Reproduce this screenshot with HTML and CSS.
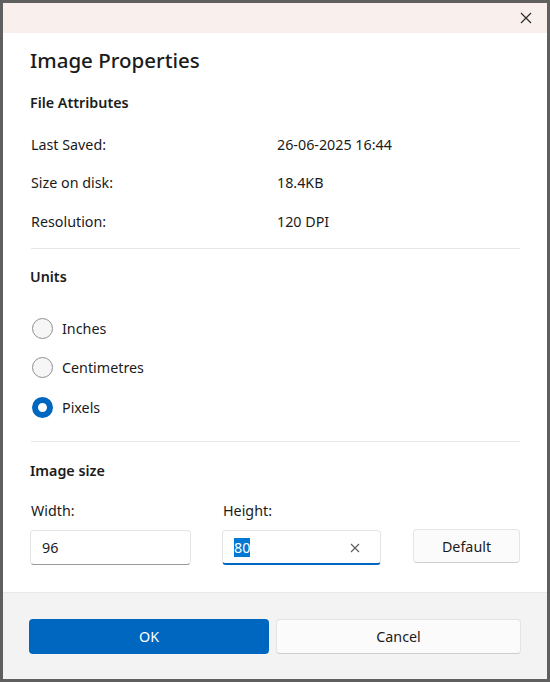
FILE: index.html
```html
<!DOCTYPE html>
<html>
<head>
<meta charset="utf-8">
<link rel="stylesheet" href="styles.css">
</head>
<body>
<div class="window">
  <div class="titlebar">
    <div class="close">
      <svg width="12" height="12" viewBox="0 0 12 12"><path d="M1 1 L11 11 M11 1 L1 11" stroke="#2b2b2b" stroke-width="1.2" fill="none"/></svg>
    </div>
  </div>
  <div class="content">
    <h1 class="title">Image Properties</h1>
    <h2 class="section first">File Attributes</h2>
    <div class="attrs">
      <div class="label">Last Saved:</div><div class="value">26-06-2025 16:44</div>
      <div class="label">Size on disk:</div><div class="value">18.4KB</div>
      <div class="label">Resolution:</div><div class="value">120 DPI</div>
    </div>
    <div class="sep sep1"></div>
    <h2 class="section units">Units</h2>
    <div class="radios">
      <div class="radio"><span class="dot"></span><span>Inches</span></div>
      <div class="radio"><span class="dot"></span><span>Centimetres</span></div>
      <div class="radio"><span class="dot checked"></span><span>Pixels</span></div>
    </div>
    <div class="sep sep2"></div>
    <h2 class="section size">Image size</h2>
    <div class="sizes">
      <div class="field f-width">
        <div class="flabel">Width:</div>
        <div class="input"><span class="txt">96</span></div>
      </div>
      <div class="field f-height">
        <div class="flabel">Height:</div>
        <div class="input focused"><span class="txt"><span class="sel">80</span></span>
          <svg class="clear" width="10" height="10" viewBox="0 0 10 10"><path d="M1 1 L9 9 M9 1 L1 9" stroke="#5c5c5c" stroke-width="1.1" fill="none"/></svg>
        </div>
      </div>
      <div class="field f-default">
        <div class="btn default">Default</div>
      </div>
    </div>
  </div>
  <div class="footer">
    <div class="btn ok">OK</div>
    <div class="btn cancel">Cancel</div>
  </div>
</div>
</body>
</html>
```
FILE: styles.css
```css
* { box-sizing: border-box; }
html, body { margin: 0; padding: 0; background: #ffffff; }
body {
  font-family: "Noto Sans", "Open Sans", sans-serif;
  color: #1b1b1b;
  font-size: 14.3px;
}
.window {
  width: 550px;
  height: 682px;
  border: 3px solid #5f5f5f;
  border-right-width: 3px;
  display: flex;
  flex-direction: column;
  background: #ffffff;
}
.titlebar {
  height: 30px;
  background: #f9efed;
  display: flex;
  justify-content: flex-end;
  align-items: center;
  padding-right: 15px;
  flex: none;
}
.close { width: 12px; height: 12px; display: flex; }
.content {
  flex: 1;
  padding: 0 27px 0 27px;
  display: flex;
  flex-direction: column;
}
.title {
  margin: 12px 0 0 0;
  font-size: 20.5px;
  font-weight: 500;
  line-height: 30px;
  height: 30px;
}
.section {
  margin: 0;
  font-size: 14.3px;
  font-weight: 600;
  line-height: 20px;
  height: 20px;
}
.section.first { margin-top: 18px; }
.attrs {
  margin-top: 11.75px;
  display: grid;
  grid-template-columns: 246px 1fr;
  grid-auto-rows: 38.5px;
  align-items: center;
  padding-left: 1px;
}
.sep {
  height: 1px;
  background: #e6e6e6;
  margin-left: 1px;
  margin-right: 0;
}
.sep1 { margin-top: 7.75px; }
.units { margin-top: 18px; }
.radios {
  margin-top: 21.25px;
  display: flex;
  flex-direction: column;
}
.radio {
  height: 39.5px;
  display: flex;
  align-items: center;
  gap: 9px;
  padding-left: 2px;
}
.dot {
  width: 21px;
  height: 21px;
  border-radius: 50%;
  border: 1px solid #8f8f8f;
  background: #f6f6f6;
  flex: none;
}
.dot.checked {
  border: 6px solid #0067c0;
  background: #ffffff;
}
.sep2 { margin-top: 14.25px; }
.size { margin-top: 19px; }
.sizes {
  margin-top: 20px;
  display: flex;
  align-items: flex-end;
}
.flabel {
  line-height: 20px;
  height: 20px;
  margin-bottom: 9px;
  padding-left: 1px;
}
.input {
  height: 35px;
  border: 1px solid #e5e5e5;
  border-bottom: 1px solid #9a9a9a;
  border-radius: 4px;
  background: #ffffff;
  display: flex;
  align-items: center;
  padding: 0 11px;
}
.f-width { width: 161px; margin-left: 0; }
.f-height { width: 159px; margin-left: 31px; }
.f-default { width: 107px; margin-left: 32px; }
.input.focused {
  border-bottom: 2px solid #0067c0;
  padding-top: 1px;
  justify-content: space-between;
}
.sel { background: #0078d4; color: #ffffff; }
.clear { margin-right: 9px; }
.btn {
  display: flex;
  align-items: center;
  justify-content: center;
  border-radius: 4px;
}
.default {
  height: 34px;
  margin-bottom: 2px;
  border: 1px solid #e5e5e5;
  border-bottom-color: #cfcfcf;
  background: #fbfbfb;
}
.footer {
  flex: none;
  height: 87px;
  background: #f3f3f3;
  border-top: 1px solid #e8e8e8;
  display: flex;
  align-items: flex-start;
  padding: 26px 0 0 26px;
}
.ok {
  width: 240px;
  height: 35px;
  background: #0067c0;
  color: #ffffff;
}
.cancel {
  width: 245px;
  height: 35px;
  margin-left: 7px;
  background: #fbfbfb;
  border: 1px solid #e3e3e3;
  border-bottom-color: #cdcdcd;
}
```
